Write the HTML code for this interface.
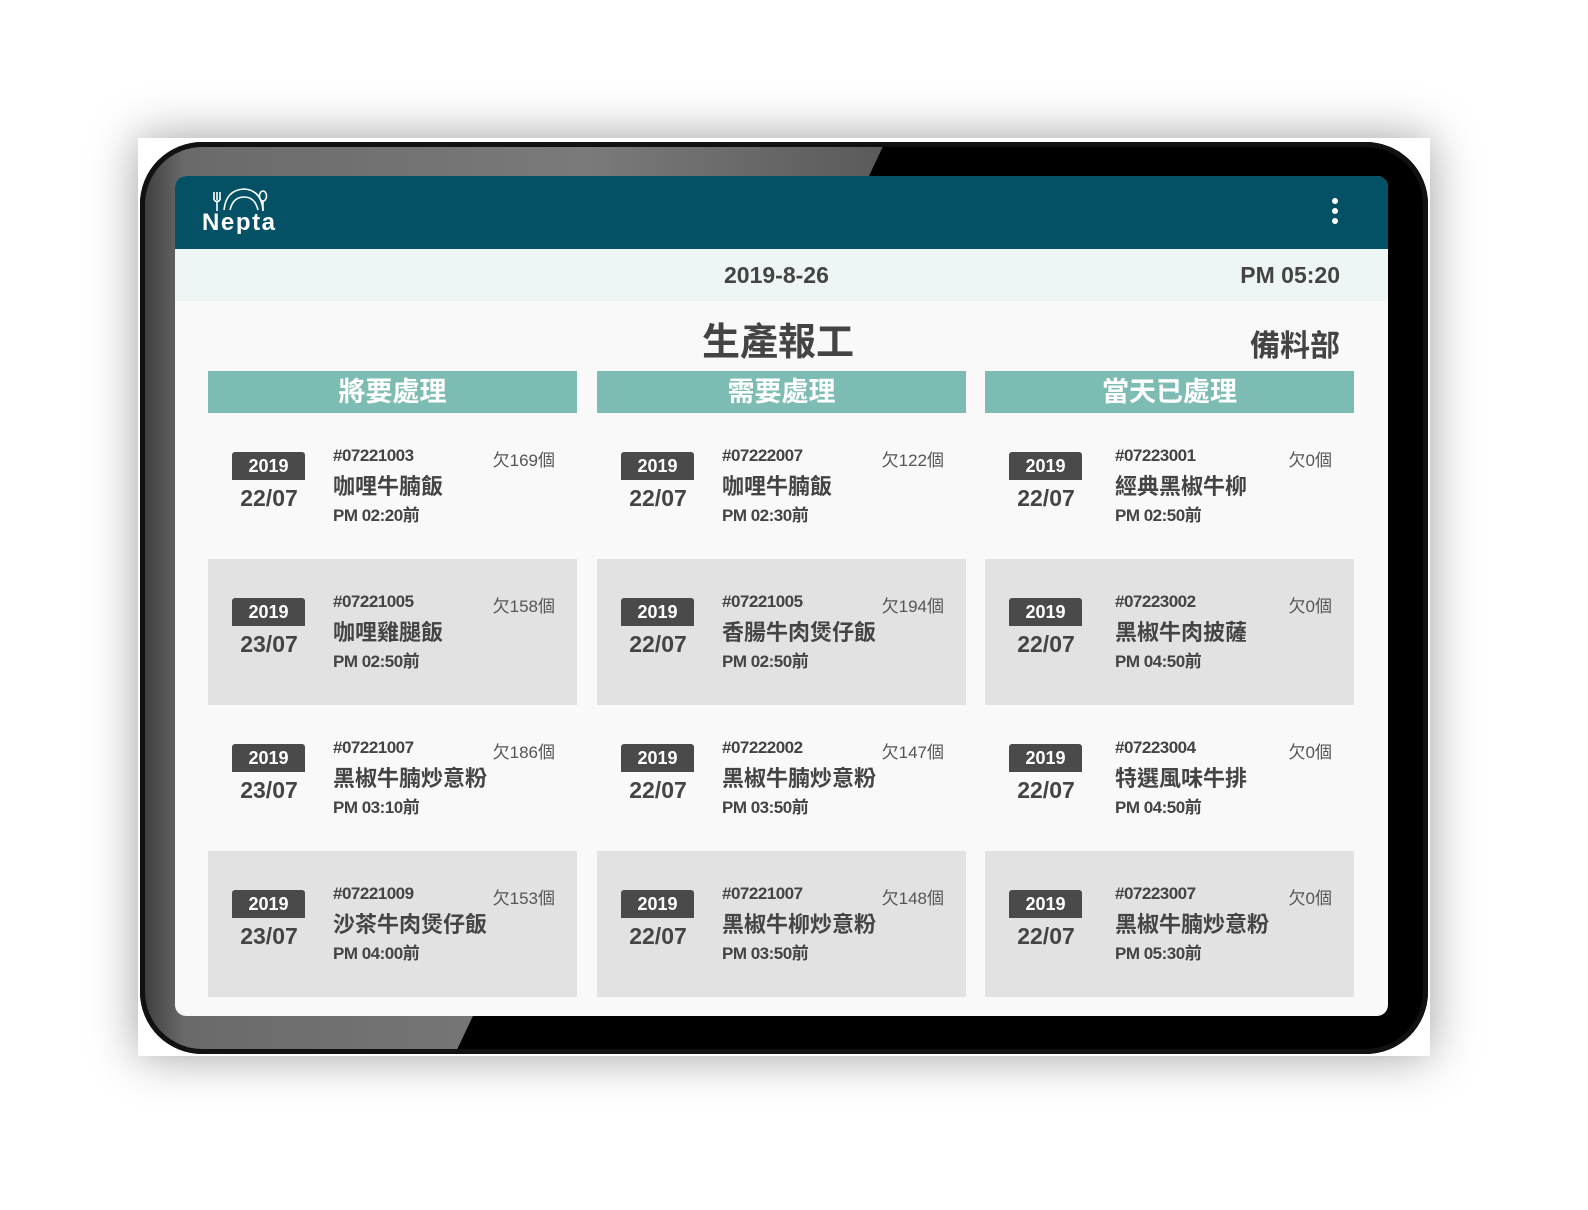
<!DOCTYPE html>
<html><head><meta charset="utf-8"><style>
*{margin:0;padding:0;box-sizing:border-box}
body{width:1588px;height:1210px;background:#fff;position:relative;overflow:hidden;font-family:"Liberation Sans","Noto Sans CJK TC",sans-serif;color:#444}
.card{position:absolute;left:138px;top:138px;width:1292px;height:918px;background:#fff;box-shadow:0 0 45px rgba(0,0,0,.38)}
.tab{position:absolute;left:140px;top:142px;width:1288px;height:912px}
.scr{position:absolute;left:175px;top:176px;width:1213px;height:840px;border-radius:11px;background:#f9f9f9;overflow:hidden}
.hdr{position:absolute;left:0;top:0;width:100%;height:73px;background:#045165}
.bar{position:absolute;left:0;top:73px;width:100%;height:52px;background:#eef6f5}
.t{position:absolute;white-space:nowrap;font-weight:bold}
.ch{position:absolute;top:195px;width:369px;height:42px;background:#7dbcb3;color:#fff;font-weight:bold;font-size:27px;text-align:center;line-height:42px}
.row{position:absolute;width:369px;height:146px}
.g{background:#e2e2e2}
.bd{position:absolute;left:24px;top:39px;width:73px;height:28px;background:#4a4a4a;color:#fff;font-weight:bold;font-size:18px;text-align:center;line-height:28px;border-radius:3px 3px 0 0}
.dt{position:absolute;left:14px;width:94px;top:72px;text-align:center;font-size:23px;font-weight:bold;color:#444}
.no{position:absolute;left:125px;top:33px;font-size:17px;font-weight:bold;letter-spacing:-.5px}
.q{position:absolute;right:22px;top:33px;font-size:17px;color:#555}
.nm{position:absolute;left:125px;top:56px;font-size:22px;font-weight:bold}
.tm{position:absolute;left:125px;top:88px;font-size:17px;font-weight:bold;letter-spacing:-.5px}
</style></head><body>
<div class="card"></div>
<svg class="tab" width="1288" height="912" viewBox="0 0 1288 912">
<defs><clipPath id="c"><rect x="0" y="0" width="1288" height="912" rx="62"/></clipPath>
<linearGradient id="gg" x1="0" y1="0" x2="1" y2="0"><stop offset="0" stop-color="#3a3a3a"/><stop offset=".06" stop-color="#6a6a6a"/><stop offset=".6" stop-color="#7a7a7a"/><stop offset="1" stop-color="#5a5a5a"/></linearGradient></defs>
<g clip-path="url(#c)"><rect width="1288" height="912" fill="#000"/><polygon points="0,0 745,0 315,912 0,912" fill="url(#gg)"/></g>
<rect x="2.5" y="2.5" width="1283" height="907" rx="60" fill="none" stroke="#111" stroke-width="5"/>
</svg>
<div class="scr">
<div class="hdr">
<svg style="position:absolute;left:26px;top:12px" width="80" height="46" viewBox="0 0 80 46">
<g fill="none" stroke="#fff" stroke-width="1.6"><path d="M13 4v8M16 4v8M19 4v8M13 12q3 3 6 0M16 13v10"/><path d="M23 22q2-20 20-21 17 1 19 21"/><path d="M29 22q3-13 14-13 11 0 14 13"/><ellipse cx="62" cy="8" rx="3.5" ry="5"/><path d="M62 13v10"/></g>
<text x="1" y="42" fill="#fff" font-family="Liberation Sans" font-weight="bold" font-size="24" textLength="73">Nepta</text></svg>
<div style="position:absolute;left:1157px;top:22px;width:6px;height:6px;border-radius:3px;background:#fff;box-shadow:0 10px 0 #fff,0 20px 0 #fff"></div>
</div>
<div class="bar"></div>
<div class="t" style="left:549px;top:86px;font-size:23px;color:#444">2019-8-26</div>
<div class="t" style="right:48px;top:86px;font-size:23px;color:#444">PM 05:20</div>
<div class="t" style="left:527px;top:135px;font-size:38px;color:#444">生產報工</div>
<div class="t" style="right:48px;top:145px;font-size:30px;color:#444">備料部</div>
<div class="ch" style="left:33px">將要處理</div>
<div class="ch" style="left:422px">需要處理</div>
<div class="ch" style="left:810px">當天已處理</div>

<div class="row" style="left:33px;top:237px"><div class="bd">2019</div><div class="dt">22/07</div><div class="no">#07221003</div><div class="q">欠169個</div><div class="nm">咖哩牛腩飯</div><div class="tm">PM 02:20前</div></div>
<div class="row g" style="left:33px;top:383px"><div class="bd">2019</div><div class="dt">23/07</div><div class="no">#07221005</div><div class="q">欠158個</div><div class="nm">咖哩雞腿飯</div><div class="tm">PM 02:50前</div></div>
<div class="row" style="left:33px;top:529px"><div class="bd">2019</div><div class="dt">23/07</div><div class="no">#07221007</div><div class="q">欠186個</div><div class="nm">黑椒牛腩炒意粉</div><div class="tm">PM 03:10前</div></div>
<div class="row g" style="left:33px;top:675px"><div class="bd">2019</div><div class="dt">23/07</div><div class="no">#07221009</div><div class="q">欠153個</div><div class="nm">沙茶牛肉煲仔飯</div><div class="tm">PM 04:00前</div></div>

<div class="row" style="left:422px;top:237px"><div class="bd">2019</div><div class="dt">22/07</div><div class="no">#07222007</div><div class="q">欠122個</div><div class="nm">咖哩牛腩飯</div><div class="tm">PM 02:30前</div></div>
<div class="row g" style="left:422px;top:383px"><div class="bd">2019</div><div class="dt">22/07</div><div class="no">#07221005</div><div class="q">欠194個</div><div class="nm">香腸牛肉煲仔飯</div><div class="tm">PM 02:50前</div></div>
<div class="row" style="left:422px;top:529px"><div class="bd">2019</div><div class="dt">22/07</div><div class="no">#07222002</div><div class="q">欠147個</div><div class="nm">黑椒牛腩炒意粉</div><div class="tm">PM 03:50前</div></div>
<div class="row g" style="left:422px;top:675px"><div class="bd">2019</div><div class="dt">22/07</div><div class="no">#07221007</div><div class="q">欠148個</div><div class="nm">黑椒牛柳炒意粉</div><div class="tm">PM 03:50前</div></div>

<div class="row" style="left:810px;top:237px"><div class="bd">2019</div><div class="dt">22/07</div><div class="no" style="left:130px">#07223001</div><div class="q">欠0個</div><div class="nm" style="left:130px">經典黑椒牛柳</div><div class="tm" style="left:130px">PM 02:50前</div></div>
<div class="row g" style="left:810px;top:383px"><div class="bd">2019</div><div class="dt">22/07</div><div class="no" style="left:130px">#07223002</div><div class="q">欠0個</div><div class="nm" style="left:130px">黑椒牛肉披薩</div><div class="tm" style="left:130px">PM 04:50前</div></div>
<div class="row" style="left:810px;top:529px"><div class="bd">2019</div><div class="dt">22/07</div><div class="no" style="left:130px">#07223004</div><div class="q">欠0個</div><div class="nm" style="left:130px">特選風味牛排</div><div class="tm" style="left:130px">PM 04:50前</div></div>
<div class="row g" style="left:810px;top:675px"><div class="bd">2019</div><div class="dt">22/07</div><div class="no" style="left:130px">#07223007</div><div class="q">欠0個</div><div class="nm" style="left:130px">黑椒牛腩炒意粉</div><div class="tm" style="left:130px">PM 05:30前</div></div>
</div>
</body></html>
